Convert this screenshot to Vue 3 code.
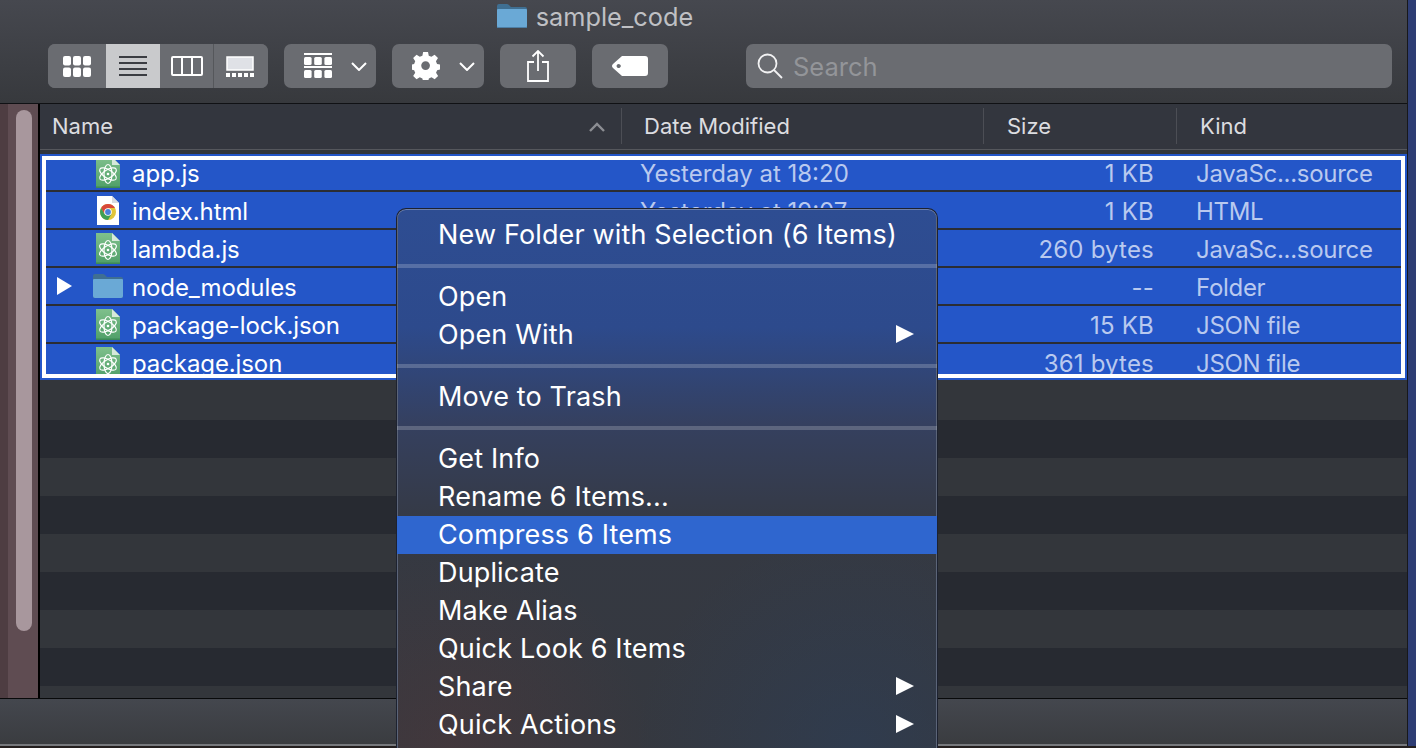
<template>
  <div class="desktop">
    <div class="window">
      <header class="toolbar">
        <div class="title">
          <svg class="title-folder" width="30" height="24" viewBox="0 0 30 24">
            <path d="M0 2q0-2 2-2h8q1.500 0 2.500 1.500L14 3h14q2 0 2 2v17q0 2-2 2H2q-2 0-2-2z" fill="#3f6f92" />
            <path d="M0 6q0-1 1-1h28q1 0 1 1v16q0 2-2 2H2q-2 0-2-2z" fill="#6aa9d6" />
            <rect y="23" width="30" height="1" fill="#4d7fa6" />
          </svg>
          <span>sample_code</span>
        </div>
        <div class="tools">
          <div class="segmented">
            <button class="seg seg-first">
              <svg width="28" height="21" viewBox="0 0 28 21" fill="#fff">
                <template v-for="y in [0, 11.500]" :key="y">
                  <rect v-for="x in [0, 10, 20]" :key="x" :x="x" :y="y" width="8" height="9.500" rx="2" />
                </template>
              </svg>
            </button>
            <button class="seg seg-active">
              <svg width="28" height="20" viewBox="0 0 28 20" fill="#3b3d42">
                <rect y="0" width="28" height="2" />
                <rect y="6" width="28" height="2" />
                <rect y="12" width="28" height="2" />
                <rect y="18" width="28" height="2" />
              </svg>
            </button>
            <button class="seg">
              <svg width="32" height="20" viewBox="0 0 32 20" fill="none" stroke="#fff" stroke-width="2">
                <rect x="1" y="1" width="30" height="18" rx="1" />
                <path d="M11 1v18M21 1v18" />
              </svg>
            </button>
            <button class="seg seg-last">
              <svg width="28" height="21" viewBox="0 0 28 21">
                <rect x="1" y="1" width="26" height="13" fill="#dfe1e6" stroke="#fff" stroke-width="1.500" />
                <rect v-for="x in [0, 6, 12, 18, 24]" :key="x" :x="x" y="17" width="4" height="4" fill="#fff" />
              </svg>
            </button>
          </div>
          <button class="tool tool-drop">
            <svg width="28" height="26" viewBox="0 0 28 26" fill="#fff">
              <rect y="0" width="28" height="2" />
              <rect y="13" width="28" height="2" />
              <template v-for="y in [4, 17]" :key="y">
                <rect v-for="x in [0, 10.200, 20.400]" :key="x" :x="x" :y="y" width="7.600" height="8" rx="1.500" />
              </template>
            </svg>
            <svg class="chev" width="16" height="9" viewBox="0 0 16 9" fill="none" stroke="#fff" stroke-width="2">
              <path d="M1 1l7 7 7-7" />
            </svg>
          </button>
          <button class="tool tool-drop">
            <svg width="28" height="28" viewBox="0 0 28 28" fill="#fff">
              <path fill-rule="evenodd" d="M11.500 0h5l.8 3.800 2.700 1.100L23.300 2.800l3.500 3.500-2.100 3.300 1.100 2.700 4 .9v4.600l-3.900.9-1.100 2.700 2.100 3.300-3.500 3.500-3.300-2.100-2.700 1.100-.9 3.900h-4.900l-.9-3.900-2.700-1.100-3.300 2.100-3.500-3.500 2.100-3.300-1.100-2.700-3.800-.9v-4.700l3.800-.8 1.100-2.700-2.100-3.300 3.500-3.500 3.300 2.100 2.700-1.100zM14 9.500a4.500 4.500 0 1 0 0 9 4.500 4.500 0 0 0 0-9z" transform="scale(.97)" />
            </svg>
            <svg class="chev" width="16" height="9" viewBox="0 0 16 9" fill="none" stroke="#fff" stroke-width="2">
              <path d="M1 1l7 7 7-7" />
            </svg>
          </button>
          <button class="tool tool-share">
            <svg width="24" height="32" viewBox="0 0 24 32" fill="none" stroke="#fff" stroke-width="1.800">
              <path d="M8 12H2v19h20V12h-6" />
              <path d="M12 21V1M6.500 6.500L12 1l5.500 5.500" />
            </svg>
          </button>
          <button class="tool tool-tag">
            <svg width="36" height="22" viewBox="0 0 36 22" fill="#fff">
              <path fill-rule="evenodd" d="M10 1h23q3 0 3 3v14q0 3-3 3H10L1 13q-2-2 0-4zM8 9.500a2 2 0 1 0 0 3 2 2 0 0 0 0-3z" />
            </svg>
          </button>
          <div class="search">
            <svg width="26" height="26" viewBox="0 0 26 26" fill="none" stroke="#f2f2f3" stroke-width="1.800">
              <circle cx="10.500" cy="10.500" r="9" />
              <path d="M17 17l8 8" />
            </svg>
            <span>Search</span>
          </div>
        </div>
      </header>

      <div class="body">
        <aside class="sidebar">
          <div class="sidebar-track"><div class="thumb"></div></div>
        </aside>
        <main class="main">
          <div class="columns">
            <div class="col col-name">
              Name
              <svg class="sort" width="16" height="10" viewBox="0 0 16 10" fill="none" stroke="#8c8e93" stroke-width="2.400">
                <path d="M1 9l7-7 7 7" />
              </svg>
            </div>
            <div class="col col-date">Date Modified</div>
            <div class="col col-size">Size</div>
            <div class="col col-kind">Kind</div>
          </div>

          <div class="selection">
            <div class="selection-inner">
              <div class="rows">
                <div v-for="file in files" :key="file.name" class="row">
                  <div class="cell-name">
                    <span class="disclosure">
                      <svg v-if="file.type === 'folder'" width="15" height="18" viewBox="0 0 15 18" fill="#fff">
                        <path d="M0 0l15 9-15 9z" />
                      </svg>
                    </span>
                    <span class="file-icon">
                      <svg v-if="file.type === 'atom'" width="24" height="31" viewBox="0 0 24 31">
                        <defs>
                          <linearGradient id="atomPage" x1="0" y1="0" x2="0" y2="1">
                            <stop offset="0" stop-color="#7fc08c" />
                            <stop offset="1" stop-color="#4f9f68" />
                          </linearGradient>
                        </defs>
                        <path d="M0 0h16l8 8v23H0z" fill="url(#atomPage)" />
                        <path d="M16 0l8 8h-8z" fill="#d6e9da" />
                        <rect y="29.500" width="24" height="1.500" fill="#3d8a56" />
                        <g fill="none" stroke="#fff" stroke-width="1.200">
                          <ellipse cx="12" cy="17" rx="9.500" ry="4.200" transform="rotate(32 12 17)" />
                          <ellipse cx="12" cy="17" rx="9.500" ry="4.200" transform="rotate(-32 12 17)" />
                          <ellipse cx="12" cy="17" rx="4" ry="9.500" />
                        </g>
                        <circle cx="12" cy="17" r="1.300" fill="#fff" />
                      </svg>
                      <svg v-else-if="file.type === 'chrome'" width="22" height="29" viewBox="0 0 22 29">
                        <path d="M0 0h15l7 7v22H0z" fill="#fff" />
                        <path d="M15 0l7 7h-7z" fill="#d8dbe0" />
                        <circle cx="11" cy="16" r="8" fill="#e2c53a" />
                        <path d="M11 8a8 8 0 0 0-6.900 4l3.400 6L11 12h7a8 8 0 0 0-7-4z" fill="#d8483a" />
                        <path d="M4.100 12A8 8 0 0 0 11 24l3.500-6-7 0z" fill="#3f9f55" />
                        <circle cx="11" cy="16" r="3.800" fill="#fff" />
                        <circle cx="11" cy="16" r="2.900" fill="#4a80d9" />
                      </svg>
                      <svg v-else width="30" height="26" viewBox="0 0 30 26">
                        <path d="M0 3q0-2 2-2h8q1.500 0 2.500 1.500L14 4h14q2 0 2 2v17q0 2-2 2H2q-2 0-2-2z" fill="#3f6f92" />
                        <path d="M0 7q0-1 1-1h28q1 0 1 1v16q0 2-2 2H2q-2 0-2-2z" fill="#6aa9d6" />
                      </svg>
                    </span>
                    <span class="file-name">{{ file.name }}</span>
                  </div>
                  <div class="cell-date">{{ file.date }}</div>
                  <div class="cell-size">{{ file.size }}</div>
                  <div class="cell-kind">{{ file.kind }}</div>
                </div>
              </div>
            </div>
          </div>

          <div class="stripes">
            <div v-for="n in 9" :key="n" class="stripe"></div>
          </div>
        </main>
      </div>

      <footer class="statusbar"></footer>
    </div>

    <div class="menu">
      <template v-for="(group, i) in menuGroups" :key="i">
        <div v-if="i > 0" class="menu-sep"></div>
        <div
          v-for="item in group"
          :key="item.label"
          class="menu-item"
          :class="{ active: item.active }"
        >
          <span class="menu-label">{{ item.label }}</span>
          <svg v-if="item.sub" class="menu-arrow" width="18" height="18" viewBox="0 0 18 18" fill="#fff">
            <path d="M0 0l18 9-18 9z" />
          </svg>
        </div>
      </template>
    </div>
  </div>
</template>

<script setup>
const files = [
  { name: 'app.js', type: 'atom', date: 'Yesterday at 18:20', size: '1 KB', kind: 'JavaSc...source' },
  { name: 'index.html', type: 'chrome', date: 'Yesterday at 19:07', size: '1 KB', kind: 'HTML' },
  { name: 'lambda.js', type: 'atom', date: '', size: '260 bytes', kind: 'JavaSc...source' },
  { name: 'node_modules', type: 'folder', date: '', size: '--', kind: 'Folder' },
  { name: 'package-lock.json', type: 'atom', date: '', size: '15 KB', kind: 'JSON file' },
  { name: 'package.json', type: 'atom', date: '', size: '361 bytes', kind: 'JSON file' },
];

const menuGroups = [
  [{ label: 'New Folder with Selection (6 Items)' }],
  [{ label: 'Open' }, { label: 'Open With', sub: true }],
  [{ label: 'Move to Trash' }],
  [
    { label: 'Get Info' },
    { label: 'Rename 6 Items...' },
    { label: 'Compress 6 Items', active: true },
    { label: 'Duplicate' },
    { label: 'Make Alias' },
    { label: 'Quick Look 6 Items' },
    { label: 'Share', sub: true },
    { label: 'Quick Actions', sub: true },
  ],
];
</script>

<style>
html,
body {
  margin: 0;
  background: #2c3a70;
}
</style>

<style scoped>
.desktop {
  position: relative;
  width: 1416px;
  height: 748px;
  overflow: hidden;
  background: linear-gradient(#2e3d74 746px, #241f1f 746px);
  font-family: Inter, "Liberation Sans", sans-serif;
  color: #fff;
}

.window {
  display: flex;
  flex-direction: column;
  width: 1408px;
  height: 746px;
  border-right: 1px solid #17181b;
  box-sizing: border-box;
  background: #2f3136;
}

.toolbar {
  flex: none;
  height: 103px;
  box-sizing: border-box;
  background: linear-gradient(#46484f, #37393d);
}

.title {
  display: flex;
  align-items: center;
  justify-content: center;
  gap: 9px;
  height: 34px;
  padding-right: 217px;
  padding-bottom: 2px;
  box-sizing: border-box;
  color: #bfc0c4;
  font-size: 25.300px;
}

.tools {
  display: flex;
  gap: 16px;
  margin-top: 10px;
  padding-left: 48px;
}

.segmented {
  display: flex;
  width: 220px;
  height: 44px;
  border-radius: 7px;
  overflow: hidden;
  background: #6a6c71;
}

.seg,
.tool {
  display: flex;
  align-items: center;
  justify-content: center;
  height: 44px;
  padding: 0;
  border: 0;
  background: #6a6c71;
}

.seg {
  width: 53px;
}

.seg-first {
  width: 58px;
}

.seg-active {
  width: 54px;
  background: #c9cacc;
}

.seg-last {
  width: 55px;
  padding-right: 2px;
  border-left: 1px solid #55575b;
}

.tool {
  border-radius: 7px;
}

.tool-drop {
  width: 92px;
  justify-content: flex-start;
  gap: 19px;
  padding-left: 20px;
}

.tool-share,
.tool-tag {
  width: 76px;
}

.search {
  display: flex;
  align-items: center;
  gap: 10px;
  width: 646px;
  height: 44px;
  margin-left: 62px;
  padding-left: 11px;
  box-sizing: border-box;
  border-radius: 7px;
  background: #6a6c71;
  color: #939599;
  font-size: 25.500px;
}

.body {
  flex: 1;
  display: flex;
  min-height: 0;
  border-top: 1px solid #101114;
  border-bottom: 1px solid #08090a;
}

.sidebar {
  flex: none;
  width: 30px;
  padding-left: 8px;
  background: #4e3d42;
  border-right: 2px solid #000;
}

.sidebar-track {
  height: 100%;
  padding: 6px 6px 0 8px;
  box-sizing: border-box;
  background: #5f4c52;
}

.thumb {
  height: 521px;
  border-radius: 8px;
  background: #a8979d;
}

.main {
  flex: 1;
  display: flex;
  flex-direction: column;
  min-width: 0;
  background: #33363b;
}

.columns {
  flex: none;
  display: flex;
  height: 45px;
  border-bottom: 1px solid #55575c;
  background: #33363e;
  color: #dcdde0;
  font-size: 22px;
}

.col {
  position: relative;
  display: flex;
  align-items: center;
  padding-left: 23px;
  padding-bottom: 2px;
  box-sizing: border-box;
}

.col + .col::before {
  content: '';
  position: absolute;
  left: 0;
  top: 4px;
  bottom: 5px;
  width: 1px;
  background: #4c4e55;
}

.col-name {
  width: 581px;
  padding-left: 12px;
}

.sort {
  position: absolute;
  left: 549px;
  top: 18px;
}

.col-date {
  width: 362px;
}

.col-size {
  width: 193px;
  padding-left: 24px;
}

.col-kind {
  flex: 1;
  padding-left: 24px;
}

.selection {
  flex: none;
  height: 226px;
  margin-top: 4px;
  padding: 2px;
  box-sizing: border-box;
  background: #2456c8;
}

.selection-inner {
  height: 100%;
  border: 4px solid #fff;
  box-sizing: border-box;
  overflow: hidden;
}

.rows {
  margin-top: -6px;
}

.row {
  display: grid;
  grid-template-columns: 594px 240px 274px 1fr;
  align-items: center;
  height: 38px;
  box-sizing: border-box;
  border-bottom: 2px solid #2b2d33;
  background: #2456c8;
  color: #b9c9ef;
  font-size: 24px;
}

.cell-name {
  display: flex;
  align-items: center;
  height: 36px;
  color: #fff;
}

.disclosure {
  display: flex;
  justify-content: flex-start;
  width: 46px;
  padding-left: 11px;
  box-sizing: border-box;
}

.file-icon {
  display: flex;
  justify-content: center;
  width: 32px;
  margin-right: 8px;
}

.file-name,
.cell-date,
.cell-size,
.cell-kind {
  padding-top: 3px;
  white-space: nowrap;
}

.file-name {
  letter-spacing: -0.100px;
}

.cell-size {
  text-align: right;
  letter-spacing: 0.200px;
}

.cell-kind {
  padding-left: 42px;
  letter-spacing: -0.300px;
}

.stripes {
  flex: 1;
  min-height: 0;
  overflow: hidden;
  padding-top: 2px;
}

.stripe {
  height: 38px;
}

.stripe:nth-child(even) {
  background: #272a31;
}

.statusbar {
  flex: none;
  height: 47px;
  box-sizing: border-box;
  border-bottom: 2px solid #77797d;
  background: linear-gradient(#44474e, #3a3c40);
}

.menu {
  position: absolute;
  left: 396px;
  top: 208px;
  width: 542px;
  height: 540px;
  padding-top: 7px;
  box-sizing: border-box;
  border: 1px solid #1d2230;
  border-bottom: 0;
  border-radius: 10px 10px 0 0;
  box-shadow: inset 0 1px 0 #6c80ae, inset 1px 0 0 #5b6478, inset -1px 0 0 #5b6478;
  background:
    radial-gradient(circle at 10% 100%, rgba(90, 55, 55, 0.35), rgba(90, 55, 55, 0) 200px),
    radial-gradient(circle at 85% 100%, rgba(40, 65, 100, 0.4), rgba(40, 65, 100, 0) 220px),
    linear-gradient(#2e4d92 0%, #2d4a8c 22%, #35405f 40%, #353942 60%, #35383f 100%);
}

.menu-item {
  display: flex;
  align-items: center;
  justify-content: space-between;
  height: 38px;
  padding: 0 23px 0 41px;
  font-size: 27px;
}

.menu-label {
  padding-bottom: 2px;
  letter-spacing: 0.150px;
  white-space: nowrap;
}

.menu-arrow {
  margin-bottom: 2px;
}

.menu-item.active {
  background: #2f66cf;
}

.menu-sep {
  height: 4px;
  margin: 10px 0;
  background: rgba(255, 255, 255, 0.2);
}
</style>
